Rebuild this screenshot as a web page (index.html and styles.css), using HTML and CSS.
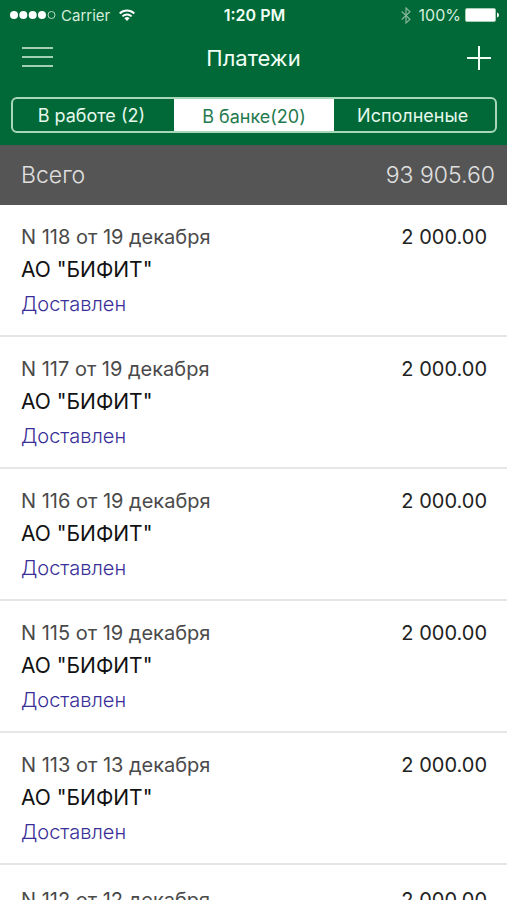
FILE: index.html
```html
<!DOCTYPE html>
<html lang="ru">
<head>
<meta charset="utf-8">
<meta name="viewport" content="width=device-width, initial-scale=1">
<title>Платежи</title>
<link rel="stylesheet" href="styles.css">
</head>
<body>
<header class="top">
  <div class="status">
    <div class="status-left">
      <svg class="signal" viewBox="0 0 46 10" aria-hidden="true"><g fill="#fff"><circle cx="4" cy="5" r="4"/><circle cx="13.3" cy="5" r="4"/><circle cx="22.7" cy="5" r="4"/><circle cx="32" cy="5" r="4"/></g><circle cx="41.5" cy="5" r="3.5" fill="none" stroke="#b9dcc5"/></svg>
      <span class="carrier">Carrier</span>
      <svg class="wifi" viewBox="0 0 16 12" aria-hidden="true"><g fill="none" stroke="#fff" stroke-width="1.8"><path d="M.7 4.5a10.4 10.4 0 0 1 14.6 0"/><path d="M3.4 7.4a6.5 6.5 0 0 1 9.2 0"/></g><path d="M8 12 5.4 9.3a3.7 3.7 0 0 1 5.2 0z" fill="#fff"/></svg>
    </div>
    <span class="clock">1:20 PM</span>
    <div class="status-right">
      <svg class="bluetooth" viewBox="0 0 10 17" aria-hidden="true"><path d="M.7 4.5 9 12.3 5 16V1l4 3.8L.7 12.5" fill="none" stroke="#85b598" stroke-width="1.2"/></svg>
      <span>100%</span>
      <svg class="battery" viewBox="0 0 34 14" aria-hidden="true"><rect x=".5" y=".5" width="30" height="13" rx="1.5" fill="#fff" stroke="#a5cfb4"/><path d="M32 4.5q2 .5 2 2.5t-2 2.5z" fill="#fff"/></svg>
    </div>
  </div>
  <div class="bar">
    <button class="icon-button" type="button" aria-label="Меню"><svg class="menu" viewBox="0 0 32 22"><path d="M0 1h31M0 10h31M0 19h31" stroke="#a3d0b3" stroke-width="2"/></svg></button>
    <h1>Платежи</h1>
    <button class="icon-button" type="button" aria-label="Добавить"><svg class="plus" viewBox="0 0 24 24"><path d="M12 0v24M0 12h24" stroke="#f2fff6" stroke-width="2"/></svg></button>
  </div>
  <nav class="tabs">
    <button type="button">В работе (2)</button>
    <button type="button" class="active">В банке(20)</button>
    <button type="button">Исполненые</button>
  </nav>
</header>
<section class="total"><span>Всего</span><span>93 905.60</span></section>
<ul class="payments">
  <li><div class="line"><span>N 118 от 19 декабря</span><span class="sum">2 000.00</span></div><div class="payee">АО "БИФИТ"</div><div class="state">Доставлен</div></li>
  <li><div class="line"><span>N 117 от 19 декабря</span><span class="sum">2 000.00</span></div><div class="payee">АО "БИФИТ"</div><div class="state">Доставлен</div></li>
  <li><div class="line"><span>N 116 от 19 декабря</span><span class="sum">2 000.00</span></div><div class="payee">АО "БИФИТ"</div><div class="state">Доставлен</div></li>
  <li><div class="line"><span>N 115 от 19 декабря</span><span class="sum">2 000.00</span></div><div class="payee">АО "БИФИТ"</div><div class="state">Доставлен</div></li>
  <li><div class="line"><span>N 113 от 13 декабря</span><span class="sum">2 000.00</span></div><div class="payee">АО "БИФИТ"</div><div class="state">Доставлен</div></li>
  <li><div class="line"><span>N 112 от 12 декабря</span><span class="sum">2 000.00</span></div><div class="payee">АО "БИФИТ"</div><div class="state">Доставлен</div></li>
</ul>
</body>
</html>
```
FILE: styles.css
```css
* { box-sizing: border-box; }
body {
  margin: 0;
  background: #fff;
  color: #333;
  font-family: Inter, "Liberation Sans", sans-serif;
}
body::-webkit-scrollbar { display: none; }
svg { display: block; }
button { font: inherit; cursor: pointer; }

.top {
  background: #006937;
  color: #f2fff6;
  padding-bottom: 12px;
}
.status {
  display: grid;
  grid-template-columns: 1fr auto 1fr;
  align-items: center;
  height: 30px;
  padding: 0 8px 0 10px;
  font-size: 16px;
}
.status-left, .status-right {
  display: flex;
  align-items: center;
  gap: 4px;
  color: #d5eedd;
}
.carrier {
  margin: 0 5px 0 1px;
  font-size: 15px;
}
.status-right { justify-content: flex-end; }
.signal { width: 46px; height: 10px; }
.wifi { width: 16px; height: 12px; }
.bluetooth { width: 10px; height: 17px; margin-right: 4px; }
.battery { width: 34px; height: 14px; }
.clock { font-weight: 600; }

.bar {
  display: grid;
  grid-template-columns: 1fr auto 1fr;
  align-items: center;
  height: 56px;
  padding: 0 16px;
}
.bar h1 {
  margin: 0;
  font-size: 22px;
  font-weight: 400;
}
.icon-button {
  padding: 0;
  border: 0;
  background: none;
}
.icon-button:last-child { justify-self: end; }
.icon-button:first-child { justify-self: start; padding-left: 6px; }
.menu { width: 32px; height: 22px; }
.plus { width: 24px; height: 24px; }

.tabs {
  display: grid;
  grid-template-columns: repeat(3, 1fr);
  height: 36px;
  margin: 11px 10px 0 11px;
  border: 2px solid #a9d8b9;
  border-radius: 6px;
  overflow: hidden;
}
.tabs button {
  padding: 0 4px 0 0;
  border: 0;
  background: none;
  color: #e6f8ec;
  font-size: 18px;
}
.tabs .active {
  padding: 3px 0 0;
  background: #fff;
  color: #1f7a4d;
}

.total {
  display: flex;
  justify-content: space-between;
  align-items: center;
  height: 60px;
  padding: 0 12px 0 21px;
  background: #555;
  color: #e0e0e0;
  font-size: 23px;
  font-weight: 300;
}

.payments {
  margin: 0;
  padding: 0;
  list-style: none;
}
.payments li {
  padding: 16px 20px 14px 21px;
  border-bottom: 2px solid #e5e5e5;
  font-size: 20px;
  line-height: 34px;
}
.payments li:last-child { padding-top: 19px; }
.line {
  display: flex;
  justify-content: space-between;
  line-height: 32px;
  color: #4a4a4a;
}
.sum { color: #222; }
.payee { color: #111; font-size: 21px; }
.state { color: #3a2f98; font-weight: 300; }
```
